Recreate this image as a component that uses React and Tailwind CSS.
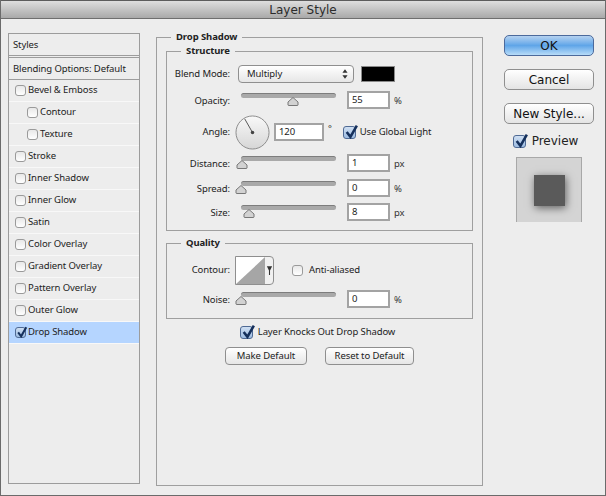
const styleRows = [
  { label: "Bevel & Emboss" },
  { label: "Contour", sub: true },
  { label: "Texture", sub: true },
  { label: "Stroke" },
  { label: "Inner Shadow" },
  { label: "Inner Glow" },
  { label: "Satin" },
  { label: "Color Overlay" },
  { label: "Gradient Overlay" },
  { label: "Pattern Overlay" },
  { label: "Outer Glow" },
  { label: "Drop Shadow", checked: true, active: true },
];

function Check({ checked, big }) {
  const box = big ? "w-[13px] h-[13px]" : "w-[11px] h-[11px]";
  const mark = big ? "left-0 -top-[3px] w-[15px] h-[15px]" : "left-0 -top-[2px] w-[12px] h-[12px]";
  return (
    <span className={`relative shrink-0 block rounded-[3px] border ${box} ${checked ? "border-[#4f6a94] bg-gradient-to-b from-[#cfdff2] to-[#9dbce2]" : "border-[#9a9a9a] bg-gradient-to-b from-[#e8e8e8] to-[#ffffff]"}`}>
      {checked && (
        <svg viewBox="0 0 14 14" className={`absolute ${mark}`}>
          <path d="M2.5 7.5 L6 12 L12 1.5" fill="none" stroke="#15305c" strokeWidth="2.4" />
        </svg>
      )}
    </span>
  );
}

function Field({ value, w = "w-[43px]" }) {
  return (
    <div className={`h-[18px] ${w} border-2 border-[#a3a3a3] bg-white pl-[3px] text-[9.5px] leading-[13px] text-[#222]`}>
      {value}
    </div>
  );
}

function Slider({ pos }) {
  return (
    <div className="relative w-[95px] h-[18px] shrink-0">
      <div className="mt-[3px] h-[5px] rounded-full border-t border-[#7d7d7d] bg-[#a9a9a9]" />
      <svg viewBox="0 0 12 9" className="absolute top-[4px] w-[12px] h-[9px]" style={{ left: pos - 6 }}>
        <path d="M6 .5 L11 5 V8 Q11 8.5 10 8.5 H2 Q1 8.5 1 8 V5 Z" fill="#d2d2d2" stroke="#777" />
      </svg>
    </div>
  );
}

function Label({ children }) {
  return <div className="w-[63px] shrink-0 text-right text-[9.5px] text-[#222]">{children}</div>;
}

function SliderRow({ label, pos, value, unit, className = "" }) {
  return (
    <div className={`flex items-center h-[18px] ${className}`}>
      <div className="pt-[2px]"><Label>{label}</Label></div>
      <div className="ml-[11px]"><Slider pos={pos} /></div>
      <div className="ml-[11px]"><Field value={value} /></div>
      <span className="ml-[4px] pt-[2px] text-[9.5px] text-[#333]">{unit}</span>
    </div>
  );
}

function Group({ title, className = "", children }) {
  return (
    <div className={`relative border border-[#9f9f9f] ${className}`}>
      <span className="absolute -top-[8px] left-[14px] bg-[#ededed] px-[5px] text-[9.5px] font-bold leading-[14px] text-[#222]">
        {title}
      </span>
      {children}
    </div>
  );
}

function SmallButton({ children, w }) {
  return (
    <button className={`${w} h-[18px] rounded-[4px] border border-[#8f8f8f] bg-gradient-to-b from-[#ffffff] to-[#e6e6e6] text-[9.5px] leading-none text-[#222]`}>
      {children}
    </button>
  );
}

function BigButton({ children, primary, className = "" }) {
  return (
    <button className={`w-[90px] h-[21px] rounded-[5px] border text-[12px] leading-none text-[#111] ${primary ? "border-[#4c6a9c] bg-gradient-to-b from-[#b5d2f0] via-[#5fa5e8] to-[#b7dcf8]" : "border-[#8f8f8f] bg-gradient-to-b from-[#ffffff] to-[#e4e4e4]"} ${className}`}>
      {children}
    </button>
  );
}

export default function App() {
  return (
    <div className="w-[606px] h-[496px] overflow-hidden border-x border-b border-[#6b6b6b] bg-[#ededed] font-['Noto_Sans',sans-serif] tracking-[-0.1px]">
      <div className="h-[19px] flex items-center justify-center border-y border-t-[#5c5c5c] border-b-[#6e6e6e] bg-gradient-to-b from-[#dedede] to-[#a9a9a9] font-['DejaVu_Sans',sans-serif] tracking-normal text-[12px] text-[#2b2b2b]">
        Layer Style
      </div>

      <div className="flex pl-[7px] pt-[14px]">
        <div className="w-[132px] h-[451px] border border-[#9c9c9c] text-[9.5px] text-[#222]">
          <div className="h-[22px] pl-[4px] leading-[21px] border-b border-[#9c9c9c]">Styles</div>
          <div className="h-[23px] mt-[1px] pl-[4px] leading-[21px] border-y border-[#9c9c9c]">Blending Options: Default</div>
          {styleRows.map((r) => (
            <div
              key={r.label}
              className={`h-[22px] flex items-center gap-[2px] border-b border-[#f8f8f8] ${r.sub ? "pl-[18px]" : "pl-[6px]"} ${r.active ? "bg-[#b5d5ff]" : ""}`}
            >
              <Check checked={r.checked} />
              <span>{r.label}</span>
            </div>
          ))}
        </div>

        <div className="w-[327px] h-[450px] ml-[16px] mt-[4px]">
          <Group title="Drop Shadow" className="h-[449px] px-[9px] pt-[13px]">
            <Group title="Structure" className="h-[180px] pt-[13px]">
              <div className="flex items-center h-[18px]">
                <Label>Blend Mode:</Label>
                <div className="ml-[8px] w-[116px] h-[18px] flex items-center justify-between pl-[8px] pr-[5px] rounded-[4px] border border-[#8f8f8f] bg-gradient-to-b from-[#ffffff] to-[#e6e6e6] text-[9.5px] text-[#222]">
                  Multiply
                  <svg viewBox="0 0 7 11" className="w-[6px] h-[10px]">
                    <path d="M3.5 0 L6.5 4 H.5 Z M3.5 11 L6.5 7 H.5 Z" fill="#333" />
                  </svg>
                </div>
                <div className="ml-[7px] w-[34px] h-[16px] border border-[#8a8a8a] bg-black" />
              </div>

              <SliderRow label="Opacity:" pos={52} value="55" unit="%" className="mt-[8px]" />

              <div className="flex items-center h-[34px] mt-[6px]">
                <Label>Angle:</Label>
                <svg viewBox="0 0 36 36" className="ml-[5px] w-[35px] h-[35px] shrink-0">
                  <defs>
                    <linearGradient id="dial" x1="0" y1="0" x2="0" y2="1">
                      <stop offset="0" stopColor="#f9f9f9" />
                      <stop offset="1" stopColor="#d6d6d6" />
                    </linearGradient>
                  </defs>
                  <circle cx="18" cy="18" r="17" fill="url(#dial)" stroke="#8a8a8a" />
                  <path d="M18 18 L10 4" stroke="#555" strokeWidth="1" />
                  <circle cx="18" cy="18" r="1.8" fill="#444" />
                </svg>
                <div className="ml-[4px]"><Field value="120" w="w-[50px]" /></div>
                <span className="ml-[4px] -mt-[6px] text-[9px] text-[#222]">°</span>
                <div className="ml-[11px] flex items-center gap-[4px] text-[9.5px] text-[#222]">
                  <Check checked big />
                  <span>Use Global Light</span>
                </div>
              </div>

              <SliderRow label="Distance:" pos={1} value="1" unit="px" className="mt-[5px]" />
              <SliderRow label="Spread:" pos={0} value="0" unit="%" className="mt-[7px]" />
              <SliderRow label="Size:" pos={8} value="8" unit="px" className="mt-[6px]" />
            </Group>

            <Group title="Quality" className="h-[76px] mt-[12px] pt-[12px]">
              <div className="flex items-center h-[29px]">
                <Label>Contour:</Label>
                <div className="ml-[5px] w-[39px] h-[29px] flex rounded-r-[4px] border border-[#8f8f8f] bg-[#f1f1f1]">
                  <svg viewBox="0 0 29 27" className="w-[29px] h-[27px] bg-white shrink-0">
                    <path d="M0 27 L29 0 V27 Z" fill="#a6a6a6" />
                  </svg>
                  <svg viewBox="0 0 8 10" className="ml-[1px] mt-[9px] w-[7px] h-[9px]">
                    <path d="M1 0 H7 L4.6 5 V10 H3.4 V5 Z" fill="#333" />
                  </svg>
                </div>
                <div className="ml-[18px] flex items-center gap-[6px] text-[9.5px] text-[#222]">
                  <Check />
                  <span>Anti-aliased</span>
                </div>
              </div>
              <SliderRow label="Noise:" pos={0} value="0" unit="%" className="mt-[5px]" />
            </Group>

            <div className="mt-[6px] mr-[4px] flex items-center justify-center gap-[5px] h-[14px] text-[9.5px] text-[#222]">
              <Check checked big />
              <span>Layer Knocks Out Drop Shadow</span>
            </div>
            <div className="mt-[8px] flex justify-center gap-[18px]">
              <SmallButton w="w-[82px]">Make Default</SmallButton>
              <SmallButton w="w-[89px]">Reset to Default</SmallButton>
            </div>
          </Group>
        </div>

        <div className="ml-[21px] pt-[2px] w-[90px] flex flex-col items-center font-['DejaVu_Sans',sans-serif] tracking-normal">
          <BigButton primary>OK</BigButton>
          <BigButton className="mt-[13px]">Cancel</BigButton>
          <BigButton className="mt-[13px]">New Style...</BigButton>
          <div className="mt-[10px] mr-[7px] flex items-center gap-[6px] text-[12px] leading-[14px] text-[#222]">
            <Check checked big />
            <span>Preview</span>
          </div>
          <div className="mt-[9px] w-[66px] h-[65px] flex items-center justify-center border-l border-t border-r border-[#a8a8a8] bg-[#d4d4d4]">
            <div className="w-[31px] h-[31px] bg-[#5a5a5a] shadow-[1px_2px_8px_rgba(0,0,0,0.55)]" />
          </div>
        </div>
      </div>
    </div>
  );
}
